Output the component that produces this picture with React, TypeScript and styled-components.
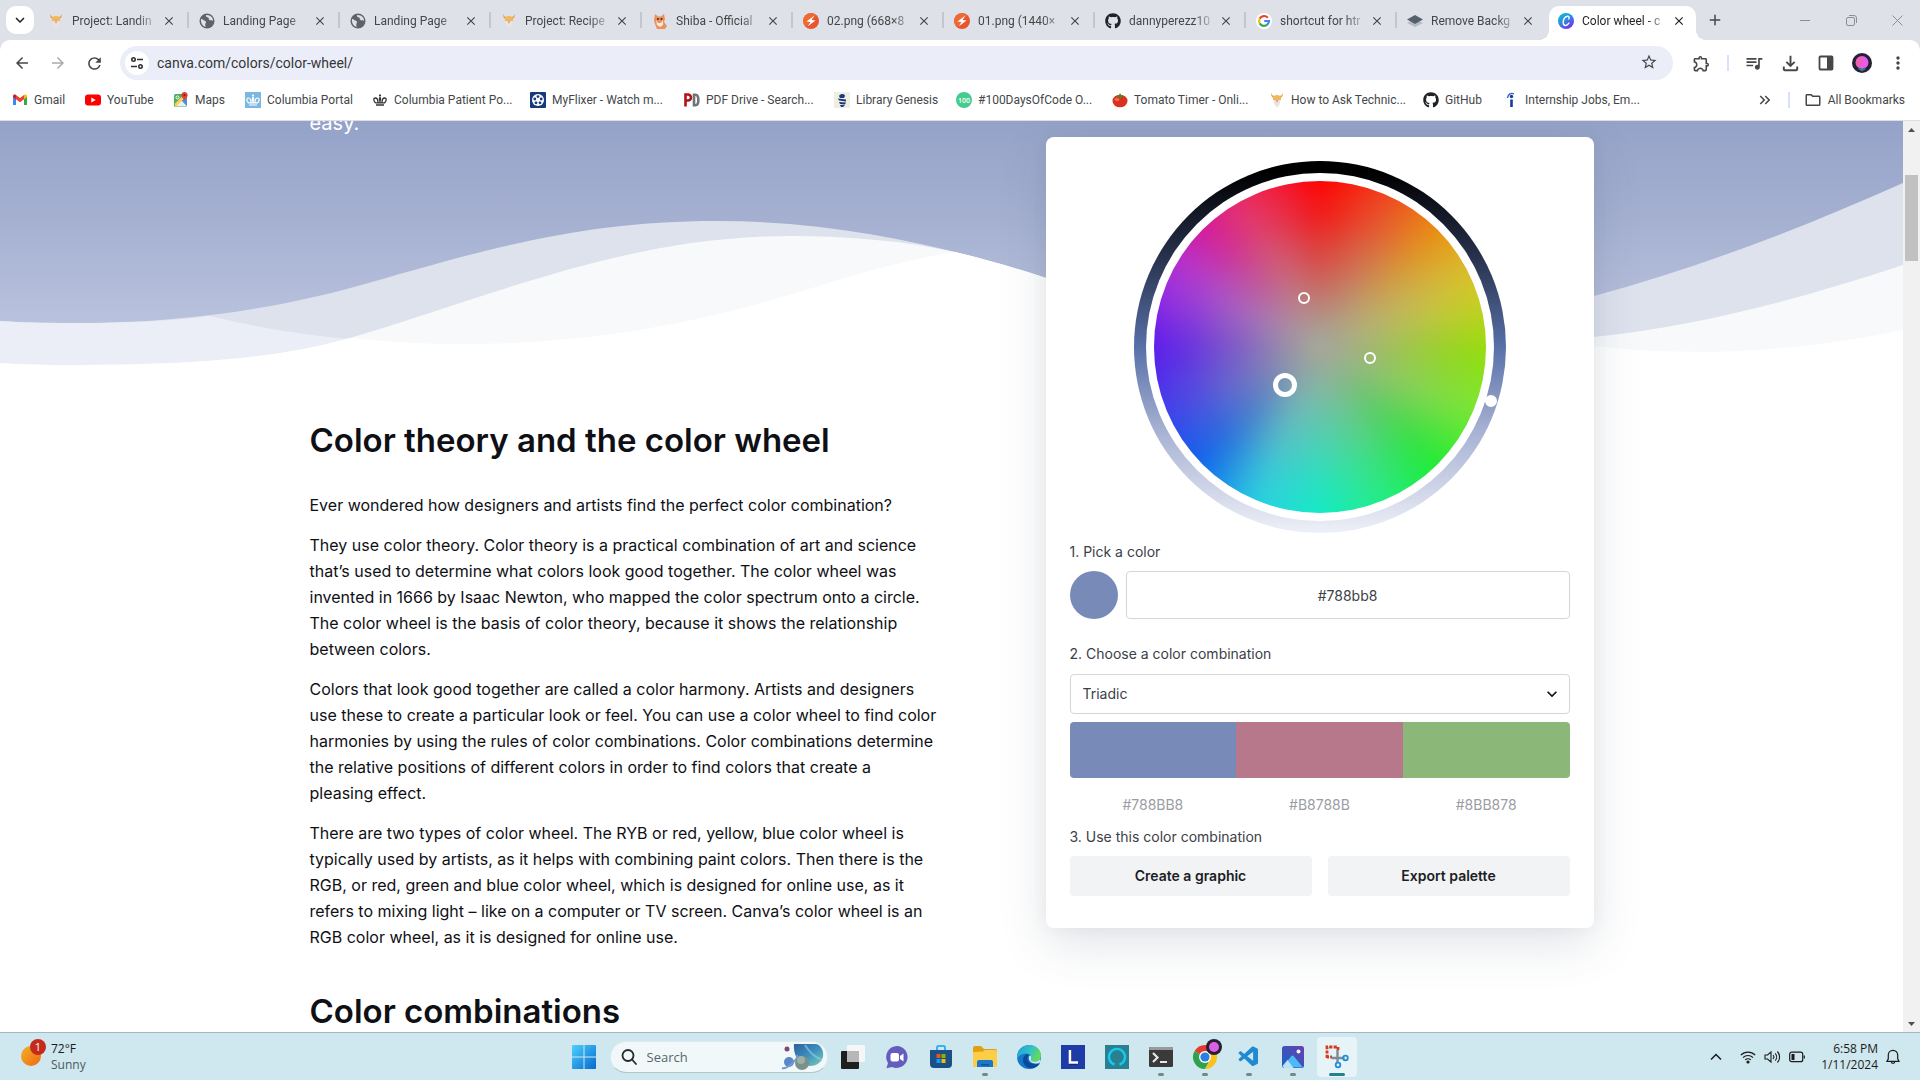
import React from "react";
import styled, { createGlobalStyle, css } from "styled-components";
import { FaGithub } from "react-icons/fa";
import { VscVscode } from "react-icons/vsc";
import {
  MdArrowBack, MdArrowForward, MdRefresh, MdStarBorder, MdOutlineExtension,
  MdOutlineQueueMusic, MdOutlineFileDownload, MdMoreVert, MdClose, MdAdd,
  MdOutlineFolder, MdKeyboardArrowDown, MdKeyboardDoubleArrowRight,
} from "react-icons/md";

const browserFont = 'Roboto, "Open Sans", sans-serif';
const uiFont = '"Open Sans", "Noto Sans", sans-serif';
const siteFont = 'Inter, "Noto Sans", sans-serif';

const GlobalStyle = createGlobalStyle`
  *, *::before, *::after { box-sizing: border-box; }
  body { margin: 0; background: #fff; font-family: ${browserFont}; }
  h2, p { margin: 0; }
  button, input, select { font: inherit; color: inherit; }
  svg { display: block; flex: none; }
`;

const Window = styled.div`
  display: flex;
  flex-direction: column;
  height: 100vh;
  overflow: hidden;
`;

const PlainButton = styled.button`
  display: flex;
  align-items: center;
  justify-content: center;
  padding: 0;
  border: 0;
  background: none;
  color: #474747;
`;

/* ---------- Tab strip ---------- */

const TabStrip = styled.header`
  display: flex;
  align-items: center;
  height: 40px;
  flex: none;
  background: #dee1e8;
`;

const TabSearch = styled(PlainButton)`
  width: 28px;
  height: 28px;
  margin: 0 4px 0 6px;
  border-radius: 10px;
  background: #fff;
  color: #1f1f1f;
`;

const TabShape = styled.div<{ $active?: boolean; $divider: boolean }>`
  position: relative;
  display: flex;
  align-items: center;
  width: 151px;
  height: 40px;
  padding: 2px 10px 0;
  gap: 8px;
  font-size: 12px;
  color: #444746;

  ${(p) => p.$divider && css`
    &::after {
      content: "";
      position: absolute;
      right: 0;
      top: 12px;
      width: 2px;
      height: 16px;
      background: #c3c7cc;
    }
  `}

  ${(p) => p.$active && css`
    color: #1f1f1f;
    z-index: 0;
    &::before {
      content: "";
      position: absolute;
      z-index: -1;
      inset: 6px 3px 0 1px;
      border-radius: 10px 10px 0 0;
      background: #fff;
    }
    &::after {
      content: "";
      position: absolute;
      z-index: -1;
      inset: auto -7px 0 -9px;
      height: 10px;
      background:
        radial-gradient(circle at 0 0, transparent 10px, #fff 10px) left / 10px 10px no-repeat,
        radial-gradient(circle at 100% 0, transparent 10px, #fff 10px) right / 10px 10px no-repeat;
    }
  `}
`;

const TabTitle = styled.span`
  flex: 1;
  white-space: nowrap;
  line-height: 20px;
  mask-image: linear-gradient(90deg, #000 80%, transparent 108%);
`;

const TabClose = styled(PlainButton)`
  width: 16px;
  height: 16px;
  margin-right: 2px;
  color: inherit;
`;

const NewTab = styled(PlainButton)`
  width: 28px;
  height: 28px;
  margin-left: 2px;
`;

const WindowControls = styled.div`
  display: flex;
  margin-left: auto;
`;

const WindowButton = styled(PlainButton)`
  width: 46px;
  height: 40px;
  color: #8b8e93;
`;

/* ---------- Toolbar ---------- */

const ToolbarBack = styled.div`
  flex: none;
  background: #dee1e8;
`;

const Toolbar = styled.nav`
  display: flex;
  align-items: center;
  height: 46px;
  padding: 0 4px;
  border-radius: 10px 10px 0 0;
  background: #fff;
`;

const ToolButton = styled(PlainButton)<{ $dim?: boolean }>`
  width: 36px;
  height: 34px;
  color: ${(p) => (p.$dim ? "#a9abae" : "#474747")};
`;

const Omnibox = styled.div`
  display: flex;
  align-items: center;
  flex: 1;
  height: 34px;
  margin: 0 10px 0 8px;
  padding: 0 5px;
  border-radius: 17px;
  background: #ebeef8;
`;

const SiteInfo = styled(PlainButton)`
  width: 24px;
  height: 24px;
  border-radius: 50%;
  background: #fff;
`;

const UrlInput = styled.input`
  flex: 1;
  min-width: 0;
  padding: 0 8px;
  border: 0;
  outline: 0;
  background: none;
  font-size: 14px;
  line-height: 20px;
  color: #333639;
`;

const BarDivider = styled.span`
  width: 2px;
  height: 16px;
  background: #d3e3fd;
`;

const DividerSlot = styled.span`
  display: flex;
  width: 17px;
  justify-content: center;
`;

/* ---------- Bookmarks ---------- */

const BookmarkBar = styled.nav`
  display: flex;
  align-items: center;
  flex: none;
  height: 35px;
  padding: 0 15px 6px 12px;
  border-bottom: 1px solid #dcdee2;
  background: #fff;
  font-size: 12px;
  color: #44474a;
`;

const Bookmark = styled.a<{ $w?: number }>`
  display: flex;
  align-items: center;
  flex: none;
  width: ${(p) => (p.$w ? p.$w + "px" : "auto")};
  gap: 6px;
  line-height: 20px;
  white-space: nowrap;
  color: inherit;
  text-decoration: none;
`;

const BookmarkTail = styled.div`
  display: flex;
  align-items: center;
  gap: 14px;
  margin-left: auto;
`;

/* ---------- Page ---------- */

const Viewport = styled.div`
  display: flex;
  flex: 1;
  min-height: 0;
`;

const Page = styled.main`
  position: relative;
  flex: 1;
  min-width: 0;
  overflow: hidden;
  background: #fff;
  font-family: ${siteFont};
`;

const Waves = styled.svg`
  position: absolute;
  top: 0;
  left: 0;
  width: 100%;
  height: 280px;
`;

const Columns = styled.div`
  position: relative;
  display: flex;
  justify-content: space-between;
  align-items: flex-start;
  gap: 32px;
  max-width: 1284px;
  margin: 0 auto;
`;

const Article = styled.article`
  width: 660px;
  margin-top: -12px;
  color: #0f1015;
`;

const Lead = styled.p`
  margin-bottom: 283px;
  font-size: 20px;
  line-height: 28px;
  color: #fff;
`;

const Heading = styled.h2`
  margin-bottom: 32px;
  font-size: 33px;
  font-weight: 600;
  line-height: 40px;
  white-space: nowrap;
`;

const Paragraph = styled.p<{ $last?: boolean }>`
  margin-bottom: ${(p) => (p.$last ? 41 : 14)}px;
  font-size: 16px;
  line-height: 26px;
  white-space: nowrap;
`;

const Card = styled.section`
  display: flex;
  flex-direction: column;
  width: 548px;
  margin-top: 16px;
  padding: 24px 24px 32px;
  border-radius: 8px;
  background: #fff;
  box-shadow: 0 16px 48px rgba(57, 76, 96, 0.15), 0 0 16px rgba(57, 76, 96, 0.05);
  font-size: 14px;
  line-height: 20px;
  color: #3c4047;
`;

const Ring = styled.div`
  position: relative;
  align-self: center;
  width: 372px;
  height: 372px;
  padding: 12px;
  border-radius: 50%;
  background: linear-gradient(#000 3%, #26304a 25%, #5870a8 50%, #a5b0d2 72%, #eef0f8 100%);
`;

const RingGap = styled.div`
  height: 100%;
  padding: 8px;
  border-radius: 50%;
  background: #fff;
`;

const Disc = styled.div`
  position: relative;
  height: 100%;
  overflow: hidden;
  border-radius: 50%;

  &::before {
    content: "";
    position: absolute;
    inset: -32px;
    filter: blur(12px);
    background: conic-gradient(#ff0000, #ee4a22 25deg, #ea8f12 45deg, #dcb82a 60deg, #cfcc28 72deg, #92de0c 92deg, #7de636 112deg, #1eec34 136deg, #24ec86 158deg, #14ebc6 180deg, #2ccfe2 203deg, #1064ec 226deg, #4440ea 248deg, #5c1cec 270deg, #9a2ee0 290deg, #b830cc 302deg, #d41a9c 315deg, #e83068 332deg, #f41830 348deg, #ff0000);
  }

  &::after {
    content: "";
    position: absolute;
    inset: 0;
    background: radial-gradient(circle closest-side, #a5a79a 0%, rgba(165, 167, 154, 0.8) 20%, rgba(165, 167, 154, 0.45) 50%, rgba(165, 167, 154, 0.16) 78%, rgba(165, 167, 154, 0) 100%);
  }
`;

const Handle = styled.button<{ $x: number; $y: number; $size: number; $stroke: number }>`
  position: absolute;
  left: ${(p) => p.$x}px;
  top: ${(p) => p.$y}px;
  width: ${(p) => p.$size}px;
  height: ${(p) => p.$size}px;
  padding: 0;
  border: ${(p) => p.$stroke}px solid #fff;
  border-radius: 50%;
  background: transparent;
  transform: translate(-50%, -50%);
`;

const FieldLabel = styled.label`
  display: block;
  margin: 25px 0 10px;
`;

const FirstLabel = styled(FieldLabel)`
  margin: 9px 0;
`;

const PickRow = styled.div`
  display: flex;
  gap: 8px;
`;

const Swatch = styled.button`
  width: 48px;
  height: 48px;
  padding: 0;
  border: 0;
  border-radius: 50%;
  background: #788bb8;
`;

const HexInput = styled.input`
  flex: 1;
  height: 48px;
  border: 1px solid #d3d6dc;
  border-radius: 4px;
  background: #fff;
  text-align: center;
`;

const SelectWrap = styled.div`
  position: relative;
  svg { position: absolute; right: 8px; top: 10px; color: #0f1015; pointer-events: none; }
`;

const Select = styled.select`
  width: 100%;
  height: 40px;
  padding: 0 12px;
  border: 1px solid #d3d6dc;
  border-radius: 4px;
  appearance: none;
  background: #fff;
`;

const Palette = styled.div`
  display: grid;
  grid-template-columns: repeat(3, 1fr);
  height: 56px;
  margin-top: 8px;
  overflow: hidden;
  border-radius: 4px;
`;

const PaletteColor = styled.div<{ $color: string }>`
  background: ${(p) => p.$color};
`;

const PaletteNames = styled.div`
  display: grid;
  grid-template-columns: repeat(3, 1fr);
  margin-top: 17px;
  text-align: center;
  color: #9a9da3;
`;

const UseTitle = styled.p`
  margin: 12px 0 9px;
`;

const Actions = styled.div`
  display: grid;
  grid-template-columns: 1fr 1fr;
  gap: 16px;
`;

const ActionButton = styled.button`
  height: 40px;
  border: 0;
  border-radius: 4px;
  background: #f2f3f5;
  font-weight: 600;
  color: #1c1e24;
`;

/* ---------- Scrollbar ---------- */

const ScrollBar = styled.div`
  display: flex;
  flex-direction: column;
  align-items: center;
  width: 17px;
  background: #f1f1f1;
`;

const ScrollArrow = styled(PlainButton)`
  width: 17px;
  height: 17px;
  color: #505050;
`;

const ScrollTrack = styled.div`
  flex: 1;
  padding-top: 37px;
`;

const ScrollThumb = styled.div`
  width: 13px;
  height: 86px;
  background: #c1c1c1;
`;

/* ---------- Taskbar ---------- */

const Taskbar = styled.footer`
  display: grid;
  grid-template-columns: 1fr auto 1fr;
  align-items: center;
  flex: none;
  height: 48px;
  border-top: 1px solid #a3b7be;
  background: #cfe7ee;
  font-family: ${uiFont};
  font-size: 12px;
  line-height: 16px;
  color: #1b1b1b;
`;

const Weather = styled(PlainButton)`
  justify-self: start;
  gap: 3px;
  margin-left: 20px;
  text-align: left;
  color: #1b1b1b;
`;

const Muted = styled.span`
  color: #4c5a60;
`;

const Stack = styled.span`
  display: flex;
  flex-direction: column;
`;

const Apps = styled.div`
  display: flex;
  align-items: center;
`;

const AppButton = styled(PlainButton)<{ $state?: "open" | "active" }>`
  position: relative;
  width: 40px;
  height: 40px;
  margin: 0 2px;
  border-radius: 4px;
  background: ${(p) => (p.$state === "active" ? "#e6f3f7" : "none")};

  ${(p) => p.$state && css`
    &::after {
      content: "";
      position: absolute;
      bottom: 1px;
      width: ${p.$state === "active" ? 16 : 6}px;
      height: 3px;
      border-radius: 2px;
      background: ${p.$state === "active" ? "#23808f" : "#76868c"};
    }
  `}
`;

const SearchBox = styled.label`
  display: flex;
  align-items: center;
  width: 218px;
  height: 32px;
  margin: 0 3px 0 4px;
  padding: 0 2px 0 10px;
  gap: 10px;
  border: 1px solid #dde9ed;
  border-bottom-color: #b4c5cb;
  border-radius: 16px;
  background: #f0f8fa;
`;

const SearchInput = styled.input`
  width: 120px;
  flex: 1;
  min-width: 0;
  padding: 0;
  border: 0;
  outline: 0;
  background: none;
  font-size: 13px;
  &::placeholder { color: #5b6468; opacity: 1; }
`;

const Tray = styled.div`
  display: flex;
  align-items: center;
  justify-self: end;
  gap: 8px;
  margin-right: 20px;
`;

const Clock = styled(Stack)`
  align-items: flex-end;
  margin-left: 8px;
`;

const TrayChevron = styled.span`
  margin-right: 10px;
`;

/* ---------- Icons ---------- */

const S16 = (p: { children: React.ReactNode }) => (
  <svg width="16" height="16" viewBox="0 0 16 16">{p.children}</svg>
);

const Odin = () => (
  <S16>
    <path d="M2 1c0 4 2 5 3 5h6c1 0 3-1 3-5-1 2-2 3-3.500 3h-5C4 4 3 3 2 1z" fill="#e9a23b" />
    <path d="M4 5c0-1 2-2 4-2s4 1 4 2v3H4z" fill="#f0b661" />
    <path d="M4.500 8h7l-.6 4L8 15.500 5.100 12z" fill="#e9e4e0" />
    <path d="M6.500 8h3L8 11z" fill="#dba58a" />
  </S16>
);
const Globe = () => (
  <S16>
    <circle cx="8" cy="8" r="7.500" fill="#5f6368" />
    <path d="M2 6c1.500-.5 2 1 3.500 1.500C7 8 7.500 9 6.500 10.500 6 11.500 6.500 13 6.500 14 3.500 13 1.500 10 2 6zM7 2c-.5 1.500.5 2 2 2.500S9 6 10.500 7c1 .8 2 .2 3.300 1C14.500 5 12 1.800 7 2z" fill="#dee1e8" />
  </S16>
);
const Shiba = () => (
  <S16>
    <path d="M3 1l3 2.500h3L12 1l1 5-1 3 3 4-2 3H5l-2-5-1-4z" fill="#e8935c" />
    <path d="M4 7l2 3h3l2-3 0 5-3 2-3-2z" fill="#fbe9dc" />
    <circle cx="6" cy="6" r="1" fill="#4a2a1c" /><circle cx="9.500" cy="6" r="1" fill="#4a2a1c" />
  </S16>
);
const Bolt = () => (
  <S16>
    <circle cx="8" cy="8" r="8" fill="#e8562f" />
    <path d="M2 3a8 8 0 0 1 11-1L3 14A8 8 0 0 1 2 3z" fill="#f07a35" opacity=".6" />
    <path d="M11.500 2.500L3.500 8.500l4 .5L4.500 13.500 12.500 7.500l-4-.5z" fill="#fff" />
  </S16>
);
const Google = () => (
  <S16>
    <circle cx="8" cy="8" r="8" fill="#fff" />
    <g fill="none" strokeWidth="2.200">
      <path d="M11.800 4.700A5 5 0 0 0 3.700 5.600" stroke="#ea4335" />
      <path d="M3.700 5.600a5 5 0 0 0 0 4.800" stroke="#fbbc05" />
      <path d="M3.700 10.400a5 5 0 0 0 7.600 1.300" stroke="#34a853" />
      <path d="M11.300 11.700A5 5 0 0 0 13 8H8.200" stroke="#4285f4" />
    </g>
  </S16>
);
const Layers = () => (
  <S16>
    <path d="M8 6l8 4-8 4-8-4z" fill="#b5bcc4" />
    <path d="M8 2l8 4.500L8 11 0 6.500z" fill="#56606c" />
  </S16>
);
const Canva = () => (
  <svg width="16" height="16" viewBox="0 0 16 16">
    <defs><linearGradient id="canva" x1="0" y1="0" x2=".7" y2="1"><stop offset="0" stopColor="#00c4cc" /><stop offset=".5" stopColor="#2b8fe0" /><stop offset="1" stopColor="#7d2ae8" /></linearGradient></defs>
    <circle cx="8" cy="8" r="8" fill="url(#canva)" />
    <path d="M10.800 6c.8-1.400.2-3-1.400-2.800C6.800 3.500 5 6.800 5.200 9.700c.2 3.600 3.600 3.600 5.700.5" fill="none" stroke="#fff" strokeWidth="1.400" strokeLinecap="round" />
  </svg>
);
const Gmail = () => (
  <S16>
    <path d="M1 4v9h3V6.500z" fill="#4285f4" /><path d="M15 4v9h-3V6.500z" fill="#34a853" />
    <path d="M1 4.500V4c0-1.500 1.600-2 2.700-1.200L4 3v4.200L1 5z" fill="#c5221f" />
    <path d="M4 3l4 3 4-3v4.200l-4 3-4-3z" fill="#ea4335" />
    <path d="M15 4.500V4c0-1.500-1.600-2-2.700-1.200L12 3v4.200L15 5z" fill="#fbbc04" />
  </S16>
);
const YouTube = () => (
  <S16><rect y="2.500" width="16" height="11" rx="3" fill="#f00" /><path d="M6.300 5.500v5l4.400-2.500z" fill="#fff" /></S16>
);
const MapsIcon = () => (
  <S16>
    <rect x="1" y="2" width="13" height="13" rx="1.500" fill="#4caf63" />
    <path d="M2 14.500L8.500 8l5.500 6v.5z" fill="#e9eef2" /><path d="M9 9l3-3 2 2v6z" fill="#4e8df5" />
    <path d="M1.500 12L11 2.500l2 2L2.500 15z" fill="#fbd14b" />
    <circle cx="4.500" cy="5.500" r="1.500" fill="none" stroke="#fff" />
    <path d="M11.500 0C9.500 0 8.300 1.500 8.300 3.200c0 2.300 2.600 3 3.200 6.300.6-3.300 3.200-4 3.200-6.300C14.700 1.500 13.500 0 11.500 0z" fill="#e04335" />
    <circle cx="11.500" cy="3.200" r="1.100" fill="#8c1f17" />
  </S16>
);
const crownPath = "M8 2.500v2M7 3.300h2M8 5c1 1.500 1 3-.1 5M8 5C7 6.500 7 8 8 10M3.500 11C1 8 1.500 6 3.300 6S6 8 6 10.500M12.500 11C15 8 14.500 6 12.700 6S10 8 10 10.500M3.500 10.800h9M4 13h8";
const CrownBlue = () => (
  <S16><rect width="16" height="16" fill="#7cb7e2" /><path d={crownPath} fill="none" stroke="#fff" strokeWidth="1.200" /></S16>
);
const Crown = () => (
  <S16><path d={crownPath} fill="none" stroke="#333" strokeWidth="1.300" /></S16>
);
const Reel = () => (
  <S16>
    <rect width="16" height="16" rx="1" fill="#153a7d" /><circle cx="8" cy="8" r="6" fill="#fff" />
    {[[8, 4.6], [11.2, 7], [10, 10.8], [6, 10.8], [4.8, 7]].map(([x, y]) => <circle key={x + "," + y} cx={x} cy={y} r="1.400" fill="#153a7d" />)}
  </S16>
);
const PdfDrive = () => (
  <S16>
    <path d="M1.500 14.500V2.500h2.500a3 3 0 0 1 0 6H2" fill="none" stroke="#b01217" strokeWidth="2.600" />
    <path d="M10 2.800h1.500c3.800 0 3.800 10.400 0 10.400H10z" fill="none" stroke="#707276" strokeWidth="2.600" />
  </S16>
);
const LibGen = () => (
  <S16>
    <rect width="16" height="16" fill="#efeee0" />
    <path d="M5 4c2-3 6-2 6 0l-1 2-4 0zM4 6.500l8 1v2l-7-1zM5 10l7 .6-1 2-5-.6zM6 13h5l-2 2H7z" fill="#173a80" />
  </S16>
);
const HundredText = styled.text`
  font: 600 7px ${uiFont};
  fill: #fff;
  text-anchor: middle;
`;
const Hundred = () => (
  <S16><circle cx="8" cy="8" r="8" fill="#44cc8e" /><HundredText x="8" y="11">100</HundredText></S16>
);
const Tomato = () => (
  <S16>
    <ellipse cx="8" cy="9" rx="7.500" ry="6.300" fill="#d9311c" /><ellipse cx="5" cy="7.500" rx="2.500" ry="1.800" fill="#ee6a4c" />
    <path d="M8 5L3.500 4.500 7 3.300 8 1l1.300 2.300 3.200 1L9.300 5 8 7z" fill="#3f8f2f" />
  </S16>
);
const Indeed = () => (
  <S16>
    <circle cx="8.500" cy="4.500" r="1.700" fill="#143c9c" /><path d="M7.200 7.500h2.600V15H7.200z" fill="#143c9c" />
    <path d="M4.500 6C5 2.500 7.500.5 11 1.800" fill="none" stroke="#2d5fd0" strokeWidth="1.300" />
  </S16>
);
const GitHubIcon = () => <FaGithub size={16} color="#1f2328" />;

const Tune = () => (
  <svg width="14" height="14" viewBox="0 0 14 14" fill="none" stroke="#303134" strokeWidth="1.600">
    <circle cx="3.500" cy="3.500" r="1.700" /><path d="M7 3.500h6M1 10.500h6" /><circle cx="10.500" cy="10.500" r="1.700" />
  </svg>
);
const SidePanel = () => (
  <svg width="16" height="16" viewBox="0 0 16 16"><rect x="1.500" y="1.500" width="13" height="13" rx="1" fill="none" stroke="#474747" strokeWidth="1.800" /><path d="M9 2h5v12H9z" fill="#474747" /></svg>
);
const Profile = () => (
  <svg width="20" height="20" viewBox="0 0 20 20"><circle cx="10" cy="10" r="10" fill="#262032" /><ellipse cx="10" cy="9.500" rx="6.500" ry="6.500" fill="#e85bf0" /><ellipse cx="7.500" cy="9" rx="3.500" ry="5" fill="#f0639a" opacity=".7" /><path d="M6 16l1.500-1.500L10 16l2.500-1.500L14 16l-4 2.500z" fill="#2b7f84" /></svg>
);

const StartIcon = () => (
  <svg width="24" height="24" viewBox="0 0 24 24">
    <defs><linearGradient id="win" x1="0" y1="0" x2="1" y2="1"><stop offset="0" stopColor="#4fd0fb" /><stop offset="1" stopColor="#0669ce" /></linearGradient></defs>
    <path d="M1 0h10.500v11.500H0V1a1 1 0 0 1 1-1zM12.500 0H23a1 1 0 0 1 1 1v10.500H12.500zM0 12.500h11.500V24H1a1 1 0 0 1-1-1zM12.500 12.500H24V23a1 1 0 0 1-1 1H12.500z" fill="url(#win)" />
  </svg>
);
const SearchGlass = () => (
  <svg width="16" height="16" viewBox="0 0 16 16" fill="none" stroke="#26292b" strokeWidth="1.800" strokeLinecap="round"><circle cx="7" cy="6.500" r="5.500" /><path d="M11 10.500l4 4.500" /></svg>
);
const Planets = () => (
  <svg width="44" height="28" viewBox="0 0 44 28">
    <defs><linearGradient id="planet" x1="0" y1="0" x2="1" y2="1"><stop offset="0" stopColor="#2e5f9c" /><stop offset=".5" stopColor="#3d8fc0" /><stop offset="1" stopColor="#7fd0b0" /></linearGradient></defs>
    <path d="M13 1h22c5 1 8 7 7 13-2 6-7 9-13 9C18 23 12 12 13 1z" fill="url(#planet)" />
    <path d="M24 2c4 7 10 12 17 15" stroke="#8fd0e4" strokeWidth="2" fill="none" opacity=".6" />
    <circle cx="6" cy="6" r="2.500" fill="#7d4a6f" />
    <circle cx="8" cy="19" r="5" fill="#5b86c8" /><path d="M1 25c4 2 17-9 15-13" fill="none" stroke="#6f9ccc" strokeWidth="2" />
    <circle cx="21" cy="20" r="7" fill="#7d8f8b" /><circle cx="20" cy="17" r="4" fill="#a9bdb2" opacity=".7" />
  </svg>
);
const TaskView = () => (
  <svg width="24" height="24" viewBox="0 0 24 24"><rect x="0" y="6" width="18" height="18" rx="1" fill="#1f1f1f" /><rect x="6" y="0" width="18" height="17" rx="1" fill="#f6f6f6" /><path d="M6 6h12v11H6z" fill="#b7b7b7" /></svg>
);
const Chat = () => (
  <svg width="24" height="24" viewBox="0 0 24 24">
    <path d="M12 1a11 11 0 1 1-5 21l-5.500 1.300L3 18A11 11 0 0 1 12 1z" fill="#655cc0" />
    <rect x="5.500" y="8" width="8.500" height="8.500" rx="2" fill="#fff" /><path d="M15 11l3.500-2.500v8L15 14z" fill="#fff" />
  </svg>
);
const Store = () => (
  <svg width="24" height="24" viewBox="0 0 24 24">
    <path d="M8 6V2.500C8 1.600 8.600 1 9.500 1h5c.9 0 1.500.6 1.500 1.500V6" fill="none" stroke="#33b4ee" strokeWidth="2" />
    <path d="M1 5h22v14a4 4 0 0 1-4 4H5a4 4 0 0 1-4-4z" fill="#1b4f86" />
    <path d="M7.500 9h4v4h-4z" fill="#f25022" /><path d="M12.500 9h4v4h-4z" fill="#7fba00" /><path d="M7.500 14h4v4h-4z" fill="#00a4ef" /><path d="M12.500 14h4v4h-4z" fill="#ffb900" />
  </svg>
);
const Explorer = () => (
  <svg width="26" height="24" viewBox="0 0 26 24">
    <path d="M1 3a2 2 0 0 1 2-2h6l3 3h11a2 2 0 0 1 2 2v3H1z" fill="#e0a010" /><path d="M1 7l10-.5L13 5h10a2 2 0 0 1 2 2v14a1 1 0 0 1-1 1H2a1 1 0 0 1-1-1z" fill="#fcce47" />
    <path d="M5 22v-5a2 2 0 0 1 2-2h12a2 2 0 0 1 2 2v5z" fill="#1877c9" /><path d="M9 19h8v1.500H9z" fill="#0c559b" />
  </svg>
);
const Edge = () => (
  <svg width="24" height="24" viewBox="0 0 24 24">
    <defs><linearGradient id="edge" x1="0" y1="0" x2="1" y2=".4"><stop offset="0" stopColor="#1b9de0" /><stop offset=".6" stopColor="#35c1c5" /><stop offset="1" stopColor="#5fdc5c" /></linearGradient></defs>
    <circle cx="12" cy="12" r="12" fill="#1377cc" />
    <path d="M0 12C.5 5 6 0 12 0c7 0 12 5 12 10.500 0 4-3 6-6.500 6-3 0-4-1.200-3.500-2.300 1.500-2.500-.5-5.700-4.500-5.700C4.500 8.500 1 11 0 14z" fill="url(#edge)" />
    <path d="M10 9c-4 2-5 6-3 10 2 3.500 6 5 10 4 3-1 5-3 6-5-3 2-9 2-12-2-1-2-1-5 1-6z" fill="#0b4a98" />
    <path d="M14 14.200c-.6 1 .5 2.300 3.500 2.300 2.500 0 4.500-1 5.700-2.600.3 2-.2 3.600-1.200 4.100-4 1.500-9 0-10-3.500-.4-2 0-4 1.500-4 1 1 1.200 2.500.5 3.700z" fill="#cfe7ee" />
  </svg>
);
const TileL = () => (
  <svg width="24" height="24" viewBox="0 0 24 24"><path d="M0 0h24v24H0z" fill="#1e3ba8" /><path d="M9.500 5v13h7" fill="none" stroke="#0b1950" strokeWidth="3" /><path d="M9 5v12.500h8" fill="none" stroke="#fff" strokeWidth="2.600" /></svg>
);
const TileRing = () => (
  <svg width="24" height="24" viewBox="0 0 24 24"><path d="M0 0h24v24H0z" fill="#2a8090" /><path d="M9.500 19.500a8 8 0 1 1 5 0" fill="none" stroke="#12cbf0" strokeWidth="2.400" /></svg>
);
const TerminalIcon = () => (
  <svg width="24" height="20" viewBox="0 0 24 20"><rect width="24" height="20" rx="1.500" fill="#3a3a3a" /><path d="M1.500 0h21A1.500 1.500 0 0 1 24 1.500V3H0V1.500z" fill="#9a9a9a" /><path d="M4 6l4.500 4.500L4 15" fill="none" stroke="#e6e6e6" strokeWidth="2.200" /><path d="M11 15h7" stroke="#e6e6e6" strokeWidth="2" /></svg>
);
const ChromeIcon = () => (
  <svg width="34" height="36" viewBox="-1 0 34 36">
    <path d="M16 18L5.600 12A12 12 0 0 1 26.400 12z" fill="#e33b2e" /><path d="M16 18L5.600 12A12 12 0 0 0 16 30l5-9z" fill="#2fa24c" /><path d="M16 18h-1l11.400-6A12 12 0 0 1 16 30l5-9z" fill="#fbc116" />
    <circle cx="16" cy="18" r="6" fill="#fff" /><circle cx="16" cy="18" r="4.600" fill="#2a7de1" />
    <circle cx="25" cy="8" r="8" fill="#262032" /><circle cx="25" cy="8" r="5" fill="#dd5fe6" />
  </svg>
);
const PhotosIcon = () => (
  <svg width="24" height="24" viewBox="0 0 24 24">
    <defs><linearGradient id="photo" x1="0" y1="1" x2="1" y2="0"><stop offset="0" stopColor="#1766c2" /><stop offset="1" stopColor="#6a3fb0" /></linearGradient></defs>
    <rect x="1" y="1" width="22" height="22" rx="2.500" fill="url(#photo)" /><path d="M1.500 22L10 11.500c1-1.200 2-1.200 3 0L22 22.500z" fill="#4fb9f5" /><path d="M1.500 21l5-6 6 8H3z" fill="#b8e4fb" /><circle cx="17.500" cy="6.500" r="2" fill="#f4f8fc" />
  </svg>
);
const SnipIcon = () => (
  <svg width="24" height="24" viewBox="0 0 24 24" fill="none">
    <path d="M2 13V2h11v3" stroke="#d8391c" strokeWidth="2.800" strokeDasharray="3.200 1.200" /><path d="M2 12h5" stroke="#d8391c" strokeWidth="2.800" strokeDasharray="2 1.200" />
    <path d="M12.500 5v13M6.500 13h13" stroke="#7f8b92" strokeWidth="2.400" /><circle cx="13" cy="20" r="2.300" stroke="#1b8fd8" strokeWidth="1.800" /><circle cx="20.500" cy="13" r="2.300" stroke="#1b8fd8" strokeWidth="1.800" />
  </svg>
);
const BadgeText = styled.text`
  font: 11px ${uiFont};
  fill: #fff;
  text-anchor: middle;
`;
const WeatherIcon = () => (
  <svg width="28" height="36" viewBox="0 0 28 36">
    <defs><linearGradient id="sun" x1="0" y1="0" x2="1" y2="1"><stop offset="0" stopColor="#f0b32c" /><stop offset="1" stopColor="#f2660f" /></linearGradient></defs>
    <circle cx="11" cy="17" r="10" fill="url(#sun)" /><circle cx="18" cy="8" r="8" fill="#c42b1c" /><BadgeText x="18" y="12">1</BadgeText>
  </svg>
);

/* ---------- Data ---------- */

const tabs: { title: string; icon: React.ReactNode; active?: boolean }[] = [
  { title: "Project: Landin", icon: <Odin /> },
  { title: "Landing Page", icon: <Globe /> },
  { title: "Landing Page", icon: <Globe /> },
  { title: "Project: Recipe", icon: <Odin /> },
  { title: "Shiba - Official", icon: <Shiba /> },
  { title: "02.png (668×8", icon: <Bolt /> },
  { title: "01.png (1440×", icon: <Bolt /> },
  { title: "dannyperezz10", icon: <GitHubIcon /> },
  { title: "shortcut for htr", icon: <Google /> },
  { title: "Remove Backg", icon: <Layers /> },
  { title: "Color wheel - c", icon: <Canva />, active: true },
];

const bookmarks: [string, React.ReactNode, number][] = [
  ["Gmail", <Gmail />, 73],
  ["YouTube", <YouTube />, 88],
  ["Maps", <MapsIcon />, 72],
  ["Columbia Portal", <CrownBlue />, 127],
  ["Columbia Patient Po...", <Crown />, 158],
  ["MyFlixer - Watch m...", <Reel />, 154],
  ["PDF Drive - Search...", <PdfDrive />, 150],
  ["Library Genesis", <LibGen />, 122],
  ["#100DaysOfCode O...", <Hundred />, 156],
  ["Tomato Timer - Onli...", <Tomato />, 157],
  ["How to Ask Technic...", <Odin />, 154],
  ["GitHub", <GitHubIcon />, 80],
  ["Internship Jobs, Em...", <Indeed />, 150],
];

const apps: [string, React.ReactNode, ("open" | "active")?][] = [
  ["Task view", <TaskView />],
  ["Chat", <Chat />],
  ["Store", <Store />],
  ["File Explorer", <Explorer />, "open"],
  ["Edge", <Edge />],
  ["L", <TileL />],
  ["Alexa", <TileRing />],
  ["Terminal", <TerminalIcon />, "open"],
  ["Chrome", <ChromeIcon />, "open"],
  ["Code", <VscVscode size={24} color="#1f8ad2" />, "open"],
  ["Photos", <PhotosIcon />, "open"],
  ["Snipping Tool", <SnipIcon />, "active"],
];

const paragraphs: string[][] = [
  ["Ever wondered how designers and artists find the perfect color combination?"],
  [
    "They use color theory. Color theory is a practical combination of art and science",
    "that’s used to determine what colors look good together. The color wheel was",
    "invented in 1666 by Isaac Newton, who mapped the color spectrum onto a circle.",
    "The color wheel is the basis of color theory, because it shows the relationship",
    "between colors.",
  ],
  [
    "Colors that look good together are called a color harmony. Artists and designers",
    "use these to create a particular look or feel. You can use a color wheel to find color",
    "harmonies by using the rules of color combinations. Color combinations determine",
    "the relative positions of different colors in order to find colors that create a",
    "pleasing effect.",
  ],
  [
    "There are two types of color wheel. The RYB or red, yellow, blue color wheel is",
    "typically used by artists, as it helps with combining paint colors. Then there is the",
    "RGB, or red, green and blue color wheel, which is designed for online use, as it",
    "refers to mixing light – like on a computer or TV screen. Canva’s color wheel is an",
    "RGB color wheel, as it is designed for online use.",
  ],
];

const palette = ["#788BB8", "#B8788B", "#8BB878"];

export default function App() {
  return (
    <Window>
      <GlobalStyle />
      <TabStrip>
        <TabSearch aria-label="Search tabs"><MdKeyboardArrowDown size={18} /></TabSearch>
        {tabs.map((t, i) => (
          <TabShape key={i} $active={t.active} $divider={i < 9}>
            {t.icon}
            <TabTitle>{t.title}</TabTitle>
            <TabClose aria-label="Close tab"><MdClose size={14} /></TabClose>
          </TabShape>
        ))}
        <NewTab aria-label="New tab"><MdAdd size={18} /></NewTab>
        <WindowControls>
          <WindowButton aria-label="Minimize"><svg width="10" height="10" stroke="currentColor"><path d="M0 5.500h10" /></svg></WindowButton>
          <WindowButton aria-label="Restore"><svg width="11" height="11" fill="none" stroke="currentColor"><rect x=".5" y="2.500" width="8" height="8" rx="1.500" /><path d="M3 .5h5a2.500 2.500 0 0 1 2.500 2.500v5" /></svg></WindowButton>
          <WindowButton aria-label="Close"><svg width="11" height="11" stroke="currentColor"><path d="M.5.5l10 10M10.500.5l-10 10" /></svg></WindowButton>
        </WindowControls>
      </TabStrip>

      <ToolbarBack>
        <Toolbar>
          <ToolButton aria-label="Back"><MdArrowBack size={18} /></ToolButton>
          <ToolButton aria-label="Forward" $dim><MdArrowForward size={18} /></ToolButton>
          <ToolButton aria-label="Reload"><MdRefresh size={19} /></ToolButton>
          <Omnibox>
            <SiteInfo aria-label="Site information"><Tune /></SiteInfo>
            <UrlInput aria-label="Address" defaultValue="canva.com/colors/color-wheel/" />
            <PlainButton aria-label="Bookmark this page"><svg width="36" height="20" viewBox="-8 0 36 20"><MdStarBorder size={18} color="#474747" /></svg></PlainButton>
          </Omnibox>
          <ToolButton aria-label="Extensions"><MdOutlineExtension size={19} /></ToolButton>
          <DividerSlot><BarDivider /></DividerSlot>
          <ToolButton aria-label="Media"><MdOutlineQueueMusic size={20} /></ToolButton>
          <ToolButton aria-label="Downloads"><MdOutlineFileDownload size={23} /></ToolButton>
          <ToolButton aria-label="Side panel"><SidePanel /></ToolButton>
          <ToolButton aria-label="Profile"><Profile /></ToolButton>
          <ToolButton aria-label="Menu"><MdMoreVert size={20} /></ToolButton>
        </Toolbar>
      </ToolbarBack>

      <BookmarkBar>
        {bookmarks.map(([name, icon, w]) => (
          <Bookmark key={name} href="#" $w={w}>{icon}{name}</Bookmark>
        ))}
        <BookmarkTail>
          <PlainButton aria-label="More bookmarks"><MdKeyboardDoubleArrowRight size={18} /></PlainButton>
          <BarDivider />
          <Bookmark href="#"><MdOutlineFolder size={18} />All Bookmarks</Bookmark>
        </BookmarkTail>
      </BookmarkBar>

      <Viewport>
        <Page>
          <Waves viewBox="0 0 1903 280" preserveAspectRatio="none">
            <defs>
              <linearGradient id="sky" x1="0" y1="0" x2="0" y2="1">
                <stop offset="0" stopColor="#95a2c8" />
                <stop offset=".35" stopColor="#a5b0d1" />
                <stop offset=".72" stopColor="#b9c2dd" />
                <stop offset="1" stopColor="#c4cce3" />
              </linearGradient>
            </defs>
            <rect width="1903" height="280" fill="url(#sky)" />
            <path d="M0 200C28 202 55 202 82 202C180 202 280 188 372 161C500 124 590 100 717 100C840 100 950 126 1046 157C1200 210 1400 230 1594 175C1700 146 1800 108 1903 62V280H0z" fill="#dde2ed" />
            <path d="M0 200C28 202 55 202 82 202C130 202 170 200 210 195C290 215 375 223 460 223V280H0z" fill="#ebeef6" />
            <path d="M0 242C30 244 55 244 82 244C190 244 275 238 350 217C500 172 630 115 791 115C850 115 905 120 955 131C985 138 1015 147 1046 157C1200 230 1400 235 1594 216C1700 205 1800 178 1903 144V280H0z" fill="#f7f9fb" />
            <path d="M0 242C30 244 55 244 82 244C190 244 275 238 350 217C387 221 424 223 460 223C640 223 760 183 845 157C885 145 918 137 955 131C985 138 1015 147 1046 157C1200 215 1400 220 1594 225C1700 237 1800 230 1903 209V280H0z" fill="#fff" />
          </Waves>
          <Columns>
            <Article>
              <Lead>easy.</Lead>
              <Heading>Color theory and the color wheel</Heading>
              {paragraphs.map((lines, i) => (
                <Paragraph key={i} $last={i === paragraphs.length - 1}>
                  {lines.map((l, j) => <React.Fragment key={j}>{j > 0 && <br />}{l}</React.Fragment>)}
                </Paragraph>
              ))}
              <Heading>Color combinations</Heading>
            </Article>

            <Card>
              <Ring>
                <RingGap><Disc /></RingGap>
                <Handle aria-label="Second color" $x={170} $y={137} $size={12} $stroke={2} />
                <Handle aria-label="Third color" $x={236} $y={197} $size={12} $stroke={2} />
                <Handle aria-label="Base color" $x={151} $y={224} $size={24} $stroke={5} />
                <Handle aria-label="Brightness" $x={357} $y={240} $size={12} $stroke={6} />
              </Ring>
              <FirstLabel htmlFor="hex">1. Pick a color</FirstLabel>
              <PickRow>
                <Swatch aria-label="Open color picker" />
                <HexInput id="hex" defaultValue="#788bb8" />
              </PickRow>
              <FieldLabel htmlFor="combo">2. Choose a color combination</FieldLabel>
              <SelectWrap>
                <Select id="combo" defaultValue="Triadic"><option>Triadic</option></Select>
                <MdKeyboardArrowDown size={20} />
              </SelectWrap>
              <Palette>{palette.map((c) => <PaletteColor key={c} $color={c} />)}</Palette>
              <PaletteNames>{palette.map((c) => <span key={c}>{c}</span>)}</PaletteNames>
              <UseTitle>3. Use this color combination</UseTitle>
              <Actions>
                <ActionButton>Create a graphic</ActionButton>
                <ActionButton>Export palette</ActionButton>
              </Actions>
            </Card>
          </Columns>
        </Page>
        <ScrollBar>
          <ScrollArrow aria-label="Scroll up"><svg width="7" height="4"><path d="M0 4L3.500 0 7 4z" fill="currentColor" /></svg></ScrollArrow>
          <ScrollTrack><ScrollThumb /></ScrollTrack>
          <ScrollArrow aria-label="Scroll down"><svg width="7" height="4"><path d="M0 0L3.500 4 7 0z" fill="currentColor" /></svg></ScrollArrow>
        </ScrollBar>
      </Viewport>

      <Taskbar>
        <Weather>
          <WeatherIcon />
          <Stack><span>72°F</span><Muted>Sunny</Muted></Stack>
        </Weather>
        <Apps>
          <AppButton aria-label="Start"><StartIcon /></AppButton>
          <SearchBox>
            <SearchGlass />
            <SearchInput aria-label="Search" placeholder="Search" />
            <Planets />
          </SearchBox>
          {apps.map(([name, icon, state]) => (
            <AppButton key={name} aria-label={name} $state={state}>{icon}</AppButton>
          ))}
        </Apps>
        <Tray>
          <TrayChevron><svg width="12" height="8" fill="none" stroke="#1b1b1b" strokeWidth="1.500"><path d="M1 6.500L6 1.500l5 5" /></svg></TrayChevron>
          <svg width="16" height="14" viewBox="0 0 16 14" fill="none" stroke="#1b1b1b" strokeWidth="1.200"><path d="M.8 5.200a10.200 10.200 0 0 1 14.400 0M3 7.600a7 7 0 0 1 10 0M5.200 9.900a4 4 0 0 1 5.600 0" /><circle cx="8" cy="12" r="1" fill="#1b1b1b" /></svg>
          <svg width="17" height="14" viewBox="0 0 17 14" fill="none" stroke="#1b1b1b" strokeWidth="1.100"><path d="M1 5h2.500L7 2v10L3.500 9H1zM9 5a3 3 0 0 1 0 4M11.200 3.300a5.500 5.500 0 0 1 0 7.400M13.400 1.500a8 8 0 0 1 0 11" /></svg>
          <svg width="16" height="12" viewBox="0 0 16 12" fill="none" stroke="#1b1b1b" strokeWidth="1.200"><rect x=".7" y="1.200" width="13" height="9.500" rx="2" /><path d="M15.300 4.500v3" /><path d="M2.500 3h3v6h-3z" fill="#1b1b1b" stroke="none" /></svg>
          <Clock><span>6:58 PM</span><span>1/11/2024</span></Clock>
          <svg width="14" height="16" viewBox="0 0 14 16" fill="none" stroke="#1b1b1b" strokeWidth="1.200"><path d="M1 12.300l1.300-2.500V6a4.700 4.700 0 0 1 9.400 0v3.800L13 12.300zM5.200 12.500a1.800 1.800 0 0 0 3.600 0" /></svg>
        </Tray>
      </Taskbar>
    </Window>
  );
}
